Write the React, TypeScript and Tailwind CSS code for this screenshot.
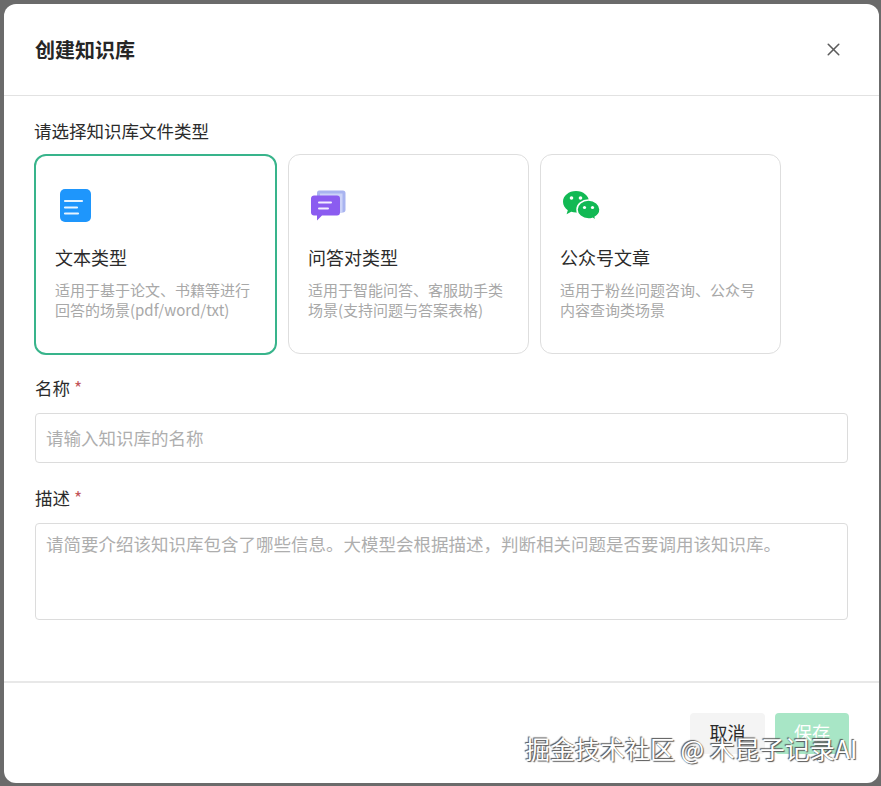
import { X } from "lucide-react";

const FONT = "font-['Noto_Sans_CJK_SC','Noto_Sans',sans-serif]";

function TextIcon() {
  return (
    <svg width="31" height="33" viewBox="0 0 31 33">
      <rect x="0" y="0" width="31" height="33" rx="5" fill="#1e96fc" />
      <path d="M5 12h17M5 18.500h12M5 24.500h13" stroke="#e6f4ff" strokeWidth="2.200" strokeLinecap="round" />
    </svg>
  );
}

function QaIcon() {
  return (
    <svg width="35" height="32" viewBox="0 0 35 32">
      <path d="M6 2.500C6 1.500 7 .5 8 .5h24c1.500 0 2.500 1 2.500 2.500v17c0 1.500-1 2.500-2.500 2.500H6z" fill="#a9b4f0" />
      <path d="M9 3.500h22.500v17.500c0 1-.5 1.500-1.500 1.500H9z" fill="#ccd3f8" />
      <path d="M3 5.500h23c2 0 3 1 3 3v14c0 2-1 3-3 3H11l-5 5v-5H3c-1.500 0-3-1-3-3v-14c0-2 1.500-3 3-3z" fill="#8b5cf0" />
      <path d="M8 12.500h12M8 18.500h9" stroke="#f3eeff" strokeWidth="2" strokeLinecap="round" />
    </svg>
  );
}

function WechatIcon() {
  return (
    <svg width="37" height="30" viewBox="0 0 37 30">
      <path d="M13 0C5.800 0 0 4.800 0 10.800c0 3.400 1.900 6.400 4.800 8.400l-1.200 4 4.600-2.400c1.500.5 3.200.8 4.800.8 1 0 1.500 0 2.500-.2C19 17 23 12.500 26 10.800 26 4.800 20.200 0 13 0z" fill="#12b954" />
      <path d="M25.500 9c-6.300 0-11.500 4.300-11.500 9.500S19.200 28 25.500 28c1.400 0 2.800-.2 4-.6l3.700 2-1-3.300c2.900-1.700 4.800-4.500 4.800-7.600C37 13.300 31.800 9 25.500 9z" fill="#12b954" stroke="#fff" strokeWidth="1.500" />
      <circle cx="8.500" cy="7" r="1.800" fill="#fff" />
      <circle cx="17.500" cy="7" r="1.800" fill="#fff" />
      <circle cx="21.500" cy="16.500" r="1.600" fill="#fff" />
      <circle cx="29.500" cy="16.500" r="1.600" fill="#fff" />
    </svg>
  );
}

const CARDS = [
  { key: "text", title: "文本类型", desc: ["适用于基于论文、书籍等进行", "回答的场景(pdf/word/txt)"], icon: <TextIcon />, active: true },
  { key: "qa", title: "问答对类型", desc: ["适用于智能问答、客服助手类", "场景(支持问题与答案表格)"], icon: <QaIcon />, active: false },
  { key: "wx", title: "公众号文章", desc: ["适用于粉丝问题咨询、公众号", "内容查询类场景"], icon: <WechatIcon />, active: false },
];

export default function App() {
  return (
    <div className={`relative h-[786px] w-[881px] overflow-hidden bg-[#6b6b6b] pt-[4px] pl-[4px] ${FONT}`}>
      <div className="flex h-[779px] w-[875px] flex-col rounded-xl bg-white">
        <div className="flex h-[92px] shrink-0 items-center justify-between border-b border-[#e2e2e2] pr-[35px] pl-[31px]">
          <h1 className="text-[20px] leading-7 font-bold text-[#262626]">创建知识库</h1>
          <X size={21} strokeWidth={1.8} className="text-[#5c5c5c]" />
        </div>

        <div className="flex-1 pr-[30px] pl-[31px]">
          <p className="mt-[23px] -ml-px text-[17.500px] leading-6 text-[#2b2b2b]">请选择知识库文件类型</p>
          <div className="mt-[11px] -ml-px flex gap-[11px]">
            {CARDS.map((c) => (
              <div
                key={c.key}
                className={
                  c.active
                    ? "h-[201px] w-[243px] rounded-xl border-2 border-[#38b48b] pt-[33px] pl-[24px]"
                    : "h-[200px] w-[241px] rounded-xl border border-[#dedede] pt-[34px] pl-[22px]"
                }
              >
                <div className="flex h-[33px] items-center">{c.icon}</div>
                <div className={`mt-[21px] text-[18px] leading-7 text-[#2b2b2b] ${c.active ? "-ml-[5px]" : "-ml-[3px]"}`}>{c.title}</div>
                <div className={`mt-[9px] text-[15px] leading-[20px] text-[#a8a8a8] ${c.active ? "-ml-[5px]" : "-ml-[3px]"}`}>
                  {c.desc.map((d) => (
                    <div key={d}>{d}</div>
                  ))}
                </div>
              </div>
            ))}
          </div>

          <label className="mt-[21px] block text-[17.500px] leading-6 text-[#2b2b2b]">
            名称 <span className="text-[#c2555a]">*</span>
          </label>
          <div className="mt-[13px] flex h-[50px] w-[813px] items-center rounded border border-[#dcdcdc] px-[10px] text-[17.500px] text-[#aeaeae]">
            请输入知识库的名称
          </div>

          <label className="mt-[23px] block text-[17.500px] leading-6 text-[#2b2b2b]">
            描述 <span className="text-[#c2555a]">*</span>
          </label>
          <div className="mt-[13px] h-[97px] w-[813px] rounded border border-[#dcdcdc] px-[10px] pt-[6px] text-[17.500px] leading-7 whitespace-nowrap text-[#aeaeae]">
            请简要介绍该知识库包含了哪些信息。大模型会根据描述，判断相关问题是否要调用该知识库。
          </div>
        </div>

        <div className="flex h-[102px] shrink-0 justify-end gap-[10px] border-t-2 border-[#e8e8e8] pt-[30px] pr-[30px]">
          <button className="h-[41px] w-[75px] pb-[3px] rounded bg-[#f4f4f4] text-[18px] text-[#2b2b2b]">取消</button>
          <button className="h-[41px] w-[74px] pb-[3px] rounded bg-[#a8e6c6] text-[18px] text-white">保存</button>
        </div>
      </div>

      {/* watermark over the footer */}
      <div className="absolute top-[732px] left-[525px] text-[25px] leading-8 whitespace-nowrap text-white [text-shadow:1px_1px_1px_#555,-1px_-1px_1px_#555]">
        掘金技术社区 @ 木昆子记录AI
      </div>
    </div>
  );
}
